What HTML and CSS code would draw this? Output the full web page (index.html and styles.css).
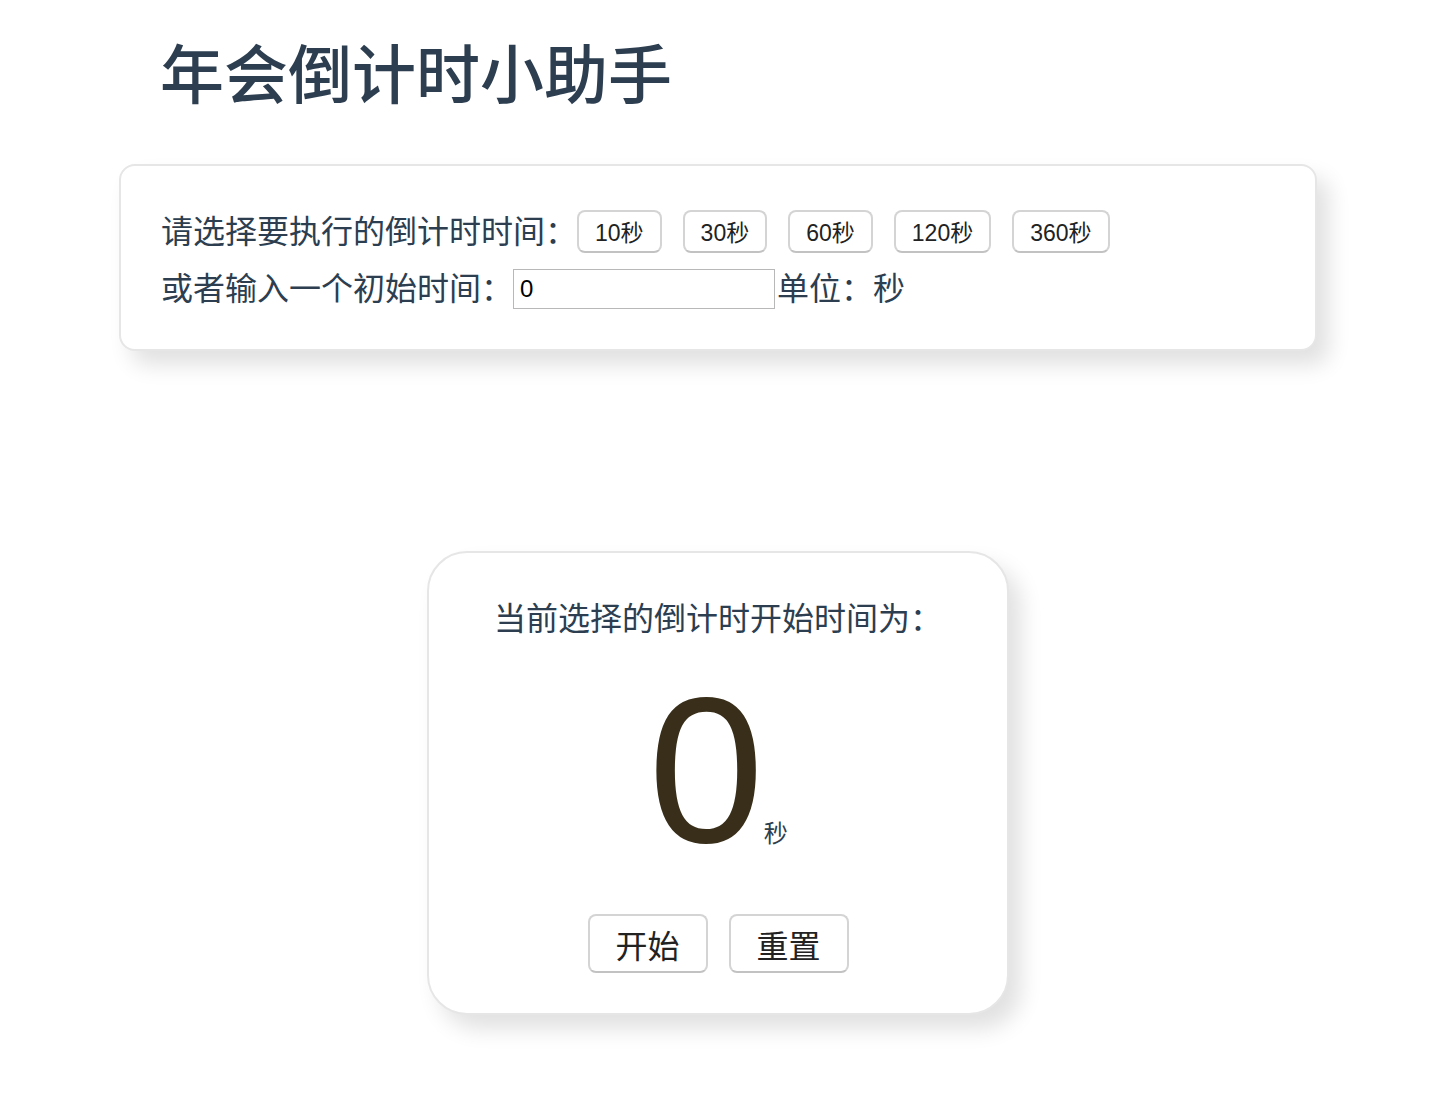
FILE: index.html
```html
<!DOCTYPE html>
<html lang="zh-CN">
<head>
<meta charset="utf-8">
<title>年会倒计时小助手</title>
<link rel="stylesheet" href="styles.css">
</head>
<body>
<div class="app">
  <h1 class="title">年会倒计时小助手</h1>
  <div class="card settings">
    <div class="row"><span class="label">请选择要执行的倒计时时间：</span><button class="preset">10秒</button><button class="preset">30秒</button><button class="preset">60秒</button><button class="preset">120秒</button><button class="preset">360秒</button></div>
    <div class="row"><span class="label">或者输入一个初始时间：</span><input class="time-input" type="text" value="0"><span class="label">单位：秒</span></div>
  </div>
  <div class="card timer">
    <div class="caption">当前选择的倒计时开始时间为：</div>
    <div class="count"><span class="num">0</span><span class="unit">秒</span></div>
    <div class="actions"><button class="action">开始</button><button class="action">重置</button></div>
  </div>
</div>
</body>
</html>
```

FILE: styles.css
```css
html, body {
  margin: 0;
  padding: 0;
  background: #fff;
}
body {
  font-family: "Liberation Sans", "Noto Sans CJK SC", sans-serif;
  color: #2c3e50;
}
.app {
  display: flex;
  flex-direction: column;
  align-items: flex-start;
  padding-bottom: 60px;
}
.title {
  margin: 24px 0 0 160px;
  font-size: 64px;
  line-height: 93px;
  font-weight: 500;
  color: #2c3e50;
  font-family: "Noto Sans CJK SC", sans-serif;
}
.card {
  background: #fff;
  border: 2px solid #e6e6e6;
  box-shadow: 12px 14px 22px rgba(0, 0, 0, 0.12);
}
.settings {
  margin: 47px 0 0 119px;
  width: 1198px;
  box-sizing: border-box;
  border-radius: 16px;
  padding: 42px 40px 38px 40px;
  display: flex;
  flex-direction: column;
  gap: 11px;
}
.row {
  display: flex;
  align-items: center;
  height: 46px;
}
.label {
  font-family: "Noto Sans CJK SC", sans-serif;
  font-size: 32px;
  line-height: 46px;
  color: #2c3e50;
  white-space: nowrap;
  position: relative;
  top: -2px;
}
.preset {
  height: 43px;
  padding: 0 16px;
  margin-right: 21px;
  font-family: "Liberation Sans", "Noto Sans CJK SC", sans-serif;
  font-size: 23px;
  color: #222;
  background: #fff;
  border: 2px solid #d4d4d4;
  border-bottom-color: #c2c2c2;
  border-radius: 8px;
}
.time-input {
  width: 262px;
  height: 40px;
  box-sizing: border-box;
  margin: 2px 2px 0 0;
  padding: 0 6px;
  border: 1px solid #b8b8b8;
  font-family: "Liberation Sans", sans-serif;
  font-size: 24px;
  color: #000;
  outline: none;
}
.timer {
  margin: 200px 0 0 427px;
  width: 582px;
  box-sizing: border-box;
  border-radius: 40px;
  padding: 40px 0 40px;
  display: flex;
  flex-direction: column;
  align-items: center;
}
.caption {
  font-family: "Noto Sans CJK SC", sans-serif;
  font-size: 32px;
  line-height: 46px;
  color: #2c3e50;
}
.count {
  margin-top: 27px;
  display: flex;
  align-items: baseline;
  height: 208px;
}
.num {
  font-family: "Liberation Sans", sans-serif;
  font-size: 208px;
  line-height: 208px;
  color: #382e19;
}
.unit {
  font-family: "Noto Sans CJK SC", sans-serif;
  font-size: 24px;
  color: #2c3e50;
}
.actions {
  margin-top: 40px;
  display: flex;
  gap: 21px;
}
.action {
  width: 120px;
  height: 59px;
  font-family: "Noto Sans CJK SC", sans-serif;
  font-size: 32px;
  color: #222;
  background: #fff;
  border: 2px solid #d4d4d4;
  border-bottom-color: #c2c2c2;
  border-radius: 8px;
  padding: 0;
}
```
